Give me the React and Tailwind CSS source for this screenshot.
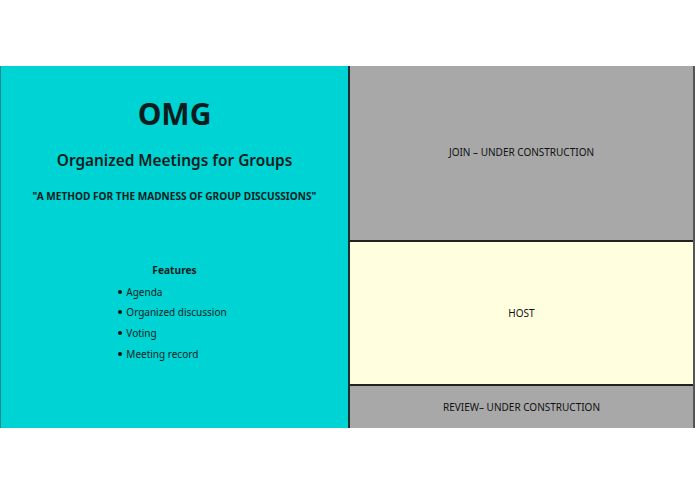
export default function App() {
  const features = ['Agenda', 'Organized discussion', 'Voting', 'Meeting record'];
  return (
    <div className="flex h-[494px] w-[695px] flex-col bg-white font-['Noto_Sans',sans-serif] text-[#111]">
      <div className="h-[66px]" />
      <div className="flex h-[362px]">
        <section className="flex w-[350px] flex-col items-center border-l border-r-2 border-l-[#0a8a8a] border-r-[#1c2e2e] bg-[#00d3d3] text-[#0b1d1d]">
          <h1 className="mt-[33px] text-[30px] font-bold leading-none">OMG</h1>
          <h2 className="mt-[24px] text-[15.4px] font-semibold leading-none">Organized Meetings for Groups</h2>
          <p className="mt-[23px] text-[10.1px] font-bold leading-none">"A METHOD FOR THE MADNESS OF GROUP DISCUSSIONS"</p>
          <div className="mt-[63px] flex flex-col items-center">
            <h3 className="text-[10.2px] font-bold leading-none">Features</h3>
            <ul className="mt-[11px] flex flex-col gap-[8.7px] pr-[4px] text-[10px] leading-[12px]">
              {features.map((f) => (
                <li key={f} className="flex items-center gap-[4px]">
                  <span className="h-[4px] w-[4px] rounded-full bg-[#111]" />
                  {f}
                </li>
              ))}
            </ul>
          </div>
        </section>
        <section className="flex flex-1 flex-col border-r-2 border-r-[#555]">
          <div className="flex h-[174px] items-center justify-center bg-[#a8a8a8] pb-[2px] text-[10px]">
            JOIN – UNDER CONSTRUCTION
          </div>
          <div className="flex h-[146px] items-center justify-center border-y-2 border-[#222] bg-[#ffffe0] text-[10px]">
            HOST
          </div>
          <div className="flex flex-1 items-center justify-center bg-[#a8a8a8] text-[10px]">
            REVIEW– UNDER CONSTRUCTION
          </div>
        </section>
      </div>
    </div>
  );
}
